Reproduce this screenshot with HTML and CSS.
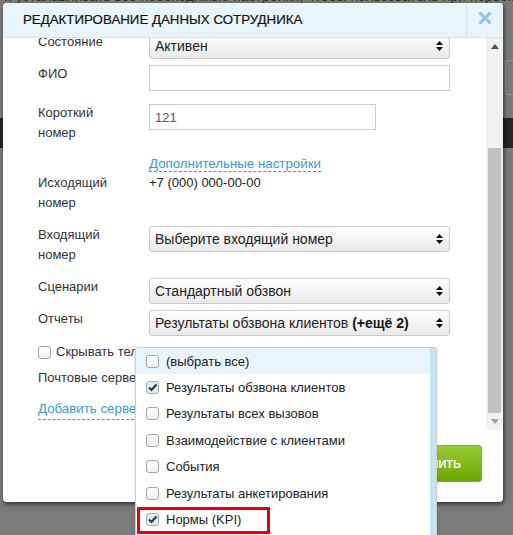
FILE: index.html
```html
<!DOCTYPE html>
<html lang="ru">
<head>
<meta charset="utf-8">
<title>Редактирование данных сотрудника</title>
<link rel="stylesheet" href="styles.css">
</head>
<body>
<div class="page">
  <div class="page-line">и устанавливать все необходимые настройки, чтобы пользователь при первом входе</div>
  <div class="page-box-row"><div class="page-box"></div></div>
  <div class="page-bar"></div>
</div>

<div class="modal">
  <div class="modal-head">
    <div class="modal-title">Редактирование данных сотрудника</div>
    <div class="modal-close">
      <svg width="14" height="14" viewBox="0 0 14 14"><path d="M1.5 1.5 L12.5 12.5 M12.5 1.5 L1.5 12.5" stroke="#8fc4e4" stroke-width="3" fill="none"/></svg>
    </div>
  </div>

  <div class="modal-body">
    <div class="form">
      <div class="form-inner">
        <div class="row">
          <div class="label">Состояние</div>
          <div class="field">
            <div class="select"><span>Активен</span><svg class="arr" width="7" height="10" viewBox="0 0 7 10"><path d="M3.5 0 L7 4 L0 4 Z M0 6 L7 6 L3.5 10 Z" fill="#111"/></svg></div>
          </div>
        </div>
        <div class="row loose">
          <div class="label">ФИО</div>
          <div class="field"><div class="input"></div></div>
        </div>
        <div class="row loose">
          <div class="label">Короткий<br>номер</div>
          <div class="field"><div class="input short"><span class="val">121</span></div></div>
        </div>
        <div class="row link-row">
          <div class="label"></div>
          <div class="field plain"><span class="dlink">Дополнительные настройки</span></div>
        </div>
        <div class="row loose">
          <div class="label">Исходящий<br>номер</div>
          <div class="field plain"><span class="phone">+7 (000) 000-00-00</span></div>
        </div>
        <div class="row loose">
          <div class="label">Входящий<br>номер</div>
          <div class="field">
            <div class="select"><span>Выберите входящий номер</span><svg class="arr" width="7" height="10" viewBox="0 0 7 10"><path d="M3.5 0 L7 4 L0 4 Z M0 6 L7 6 L3.5 10 Z" fill="#111"/></svg></div>
          </div>
        </div>
        <div class="row">
          <div class="label">Сценарии</div>
          <div class="field">
            <div class="select"><span>Стандартный обзвон</span><svg class="arr" width="7" height="10" viewBox="0 0 7 10"><path d="M3.5 0 L7 4 L0 4 Z M0 6 L7 6 L3.5 10 Z" fill="#111"/></svg></div>
          </div>
        </div>
        <div class="row r-check">
          <div class="label">Отчеты</div>
          <div class="field">
            <div class="select"><span>Результаты обзвона клиентов <b>(+ещё 2)</b></span><svg class="arr" width="7" height="10" viewBox="0 0 7 10"><path d="M3.5 0 L7 4 L0 4 Z M0 6 L7 6 L3.5 10 Z" fill="#111"/></svg></div>
          </div>
        </div>
        <div class="line-row">
          <span class="cb"></span><span>Скрывать телефон</span>
        </div>
        <div class="line-row loose">Почтовые серверы</div>
        <div class="line-row"><span class="dlink">Добавить сервер</span></div>
      </div>
    </div>
    <div class="scrollbar">
      <div class="sb-btn">
        <svg width="8" height="5" viewBox="0 0 8 5"><path d="M4 0 L8 5 L0 5 Z" fill="#505050"/></svg>
      </div>
      <div class="sb-track"><div class="sb-thumb"></div></div>
      <div class="sb-btn">
        <svg width="8" height="5" viewBox="0 0 8 5"><path d="M0 0 L8 0 L4 5 Z" fill="#a3a3a3"/></svg>
      </div>
    </div>
  </div>

  <div class="modal-foot">
    <button class="btn-save">Сохранить</button>
  </div>

  <div class="dropdown">
    <div class="dd-list">
      <div class="dd-item all"><span class="cb"></span><span>(выбрать все)</span></div>
      <div class="dd-item"><span class="cb on"><svg width="11" height="11" viewBox="0 0 11 11"><path d="M2 5.5 L4.5 8 L9.5 2.5" stroke="#333" stroke-width="2" fill="none"/></svg></span><span>Результаты обзвона клиентов</span></div>
      <div class="dd-item"><span class="cb"></span><span>Результаты всех вызовов</span></div>
      <div class="dd-item"><span class="cb"></span><span>Взаимодействие с клиентами</span></div>
      <div class="dd-item"><span class="cb"></span><span>События</span></div>
      <div class="dd-item"><span class="cb"></span><span>Результаты анкетирования</span></div>
      <div class="dd-item"><span class="cb on"><svg width="11" height="11" viewBox="0 0 11 11"><path d="M2 5.5 L4.5 8 L9.5 2.5" stroke="#333" stroke-width="2" fill="none"/></svg></span><span>Нормы (KPI)</span></div>
    </div>
    <div class="highlight"></div>
  </div>
</div>
</body>
</html>
```

FILE: styles.css
```css
* { box-sizing: border-box; }

html, body {
  margin: 0;
  height: 100%;
  overflow: hidden;
}

body {
  background: #7a7a7a;
  font-family: "Liberation Sans", Arial, sans-serif;
  font-size: 13px;
  color: #333;
  position: relative;
}

/* page behind the overlay */
.page-line {
  margin-top: -11px;
  height: 14px;
  line-height: 14px;
  font-size: 14px;
  color: #303030;
  background: #7d7c72;
  white-space: nowrap;
  overflow: hidden;
  padding-left: 4px;
}

.page-box-row {
  margin-top: 57px;
  height: 35px;
  display: flex;
  justify-content: flex-end;
}

.page-box {
  width: 10px;
  margin-right: -2px;
  border: 1px solid #909090;
  border-right: 0;
  border-radius: 3px 0 0 3px;
}

.page-bar {
  margin-top: 23px;
  height: 30px;
  background: #262626;
}

/* modal */
.modal {
  position: absolute;
  left: 3px;
  top: 3px;
  width: 500px;
  height: 499px;
  background: #fff;
  border-radius: 4px;
  box-shadow: 1px 2px 4px rgba(0, 0, 0, 0.6);
  display: flex;
  flex-direction: column;
}

.modal-head {
  height: 35px;
  flex: none;
  display: flex;
  background: #e8f5fd;
  border-bottom: 1px solid #d3e6f2;
  border-radius: 4px 4px 0 0;
}

.modal-title {
  flex: 1;
  padding-left: 20px;
  line-height: 34px;
  font-size: 13.3px;
  color: #111;
  text-transform: uppercase;
  -webkit-text-stroke: 0.2px #111;
}

.modal-close {
  width: 37px;
  border-left: 1px solid #d3e6f2;
  display: flex;
  justify-content: center;
  padding-top: 8px;
}

.modal-body {
  height: 392px;
  flex: none;
  display: flex;
}

.form {
  flex: 1;
  overflow: hidden;
}

.form-inner {
  margin-top: -6px;
  padding-left: 35px;
}

.row {
  display: flex;
  margin-bottom: 5px;
}

.row.loose { margin-bottom: 12px; }
.row.r-check { margin-bottom: 6px; }
.row.link-row { margin-bottom: 0; }

.label {
  width: 111px;
  flex: none;
  line-height: 20px;
}

.field {
  width: 301px;
  padding-top: 1px;
}

.field.plain {
  padding-top: 0;
  line-height: 20px;
}

.link-row .label,
.link-row .field { line-height: 18px; }

.select {
  height: 26px;
  border: 1px solid #c9c9c9;
  border-radius: 3px;
  background: linear-gradient(#ffffff, #e9e9e9);
  display: flex;
  align-items: center;
  justify-content: space-between;
  padding: 0 6px 0 5px;
  font-size: 14px;
  color: #222;
}

.select b { color: #111; }

.input {
  height: 26px;
  border: 1px solid #cccccc;
  background: #fff;
  display: flex;
  align-items: center;
  padding-left: 5px;
}

.input.short { width: 227px; }

.val { color: #6e4880; }

.phone { font-size: 13px; color: #222; }

.dlink {
  color: #3a9ad5;
  border-bottom: 1px dashed #3a9ad5;
  font-size: 13.3px;
}

.line-row {
  display: flex;
  align-items: center;
  gap: 5px;
  line-height: 20px;
  margin-bottom: 6px;
}

.line-row.loose { margin-bottom: 11px; }

.cb {
  width: 13px;
  height: 13px;
  flex: none;
  border: 1px solid #a5a5a5;
  border-radius: 3px;
  background: linear-gradient(#ffffff, #f0f0f0);
  display: inline-flex;
  align-items: center;
  justify-content: center;
}

.cb.on {
  background: #dcecf8;
  border-color: #9fb2c2;
}

/* scrollbar */
.scrollbar {
  width: 17px;
  flex: none;
  background: #f1f1f1;
  display: flex;
  flex-direction: column;
}

.sb-btn {
  height: 17px;
  display: flex;
  align-items: center;
  justify-content: center;
}

.sb-track { flex: 1; }

.sb-thumb {
  margin: 93px 2px 0 2px;
  height: 265px;
  background: #c1c1c1;
}

/* footer */
.modal-foot {
  flex: 1;
  display: flex;
  justify-content: flex-end;
  align-items: flex-start;
  padding: 15px 21px 0 0;
}

.btn-save {
  height: 37px;
  padding: 0 20px;
  background: linear-gradient(#98cc36, #6aa600);
  border: 1px solid #80b423;
  border-radius: 3px;
  color: #fff;
  font-family: "Liberation Sans", Arial, sans-serif;
  font-weight: bold;
  font-size: 11px;
  text-transform: uppercase;
}

/* dropdown */
.dropdown {
  position: absolute;
  left: 132px;
  top: 344px;
  width: 302px;
  height: 220px;
  background: #fff;
  border: 1px solid #cfcfcf;
  border-radius: 3px 3px 0 0;
  box-shadow: 0 1px 3px rgba(0, 0, 0, 0.15);
}

.dd-list {
  border-right: 6px solid #c7e4f2;
  height: 100%;
}

.dd-item {
  height: 26.4px;
  display: flex;
  align-items: center;
  gap: 7px;
  padding-left: 10px;
  font-size: 13px;
  color: #222;
}

.dd-item.all { background: #e8f5fd; }

.highlight {
  position: absolute;
  left: 1px;
  top: 159px;
  width: 133px;
  height: 27px;
  border: 3px solid #e8000e;
}
```
